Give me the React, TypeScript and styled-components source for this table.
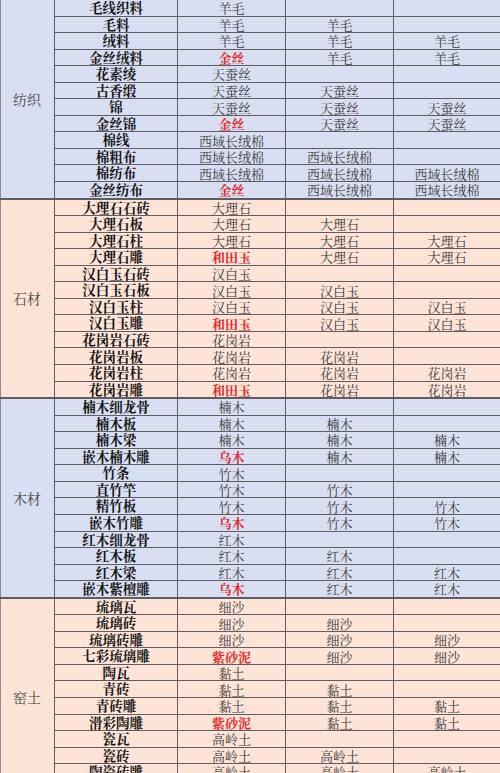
import React from "react";
import styled, { createGlobalStyle } from "styled-components";

const GlobalStyle = createGlobalStyle`
  html, body {
    margin: 0;
    padding: 0;
    background: #ffffff;
  }
  body {
    font-family: "Noto Serif CJK SC", "Noto Sans CJK SC", "Liberation Serif", serif;
    overflow: hidden;
  }
`;

const LINE = "#5d5d63";

const Table = styled.div`
  width: 500px;
  display: flex;
  flex-direction: column;
  gap: 2px;
  background: ${LINE};
`;

const Section = styled.div<{ $bg: string }>`
  display: grid;
  grid-template-columns: 53px 122px 107px 107px 106px;
  grid-auto-rows: 15.55px;
  gap: 1px;
  border-left: 1px solid #8a8a90;
  background: ${LINE};
  --cell-bg: ${(p) => p.$bg};
`;

const Cell = styled.div`
  background: var(--cell-bg);
  display: flex;
  align-items: center;
  justify-content: center;
  white-space: nowrap;
  line-height: 1;
`;

const Category = styled(Cell)`
  grid-column: 1;
  grid-row: 1 / span 12;
  font-size: 14px;
  color: #4a4a4a;
  padding-right: 1px;
`;

const ItemCell = styled(Cell)`
  font-size: 13.5px;
  font-weight: 700;
  color: #151515;
`;

const MatCell = styled(Cell)<{ $red?: boolean }>`
  font-size: 13px;
  font-weight: ${(p) => (p.$red ? 700 : 400)};
  color: ${(p) => (p.$red ? "#de2a2a" : "#3a3a3a")};
`;

type Group = { base: string; red: string; items: string[] };
type SectionData = { name: string; bg: string; groups: Group[] };

const BLUE = "#d9dff2";
const PEACH = "#fde4d7";

const sections: SectionData[] = [
  {
    name: "纺织",
    bg: BLUE,
    groups: [
      { base: "羊毛", red: "金丝", items: ["毛线织料", "毛料", "绒料", "金丝绒料"] },
      { base: "天蚕丝", red: "金丝", items: ["花素绫", "古香缎", "锦", "金丝锦"] },
      { base: "西域长绒棉", red: "金丝", items: ["棉线", "棉粗布", "棉纺布", "金丝纺布"] },
    ],
  },
  {
    name: "石材",
    bg: PEACH,
    groups: [
      { base: "大理石", red: "和田玉", items: ["大理石石砖", "大理石板", "大理石柱", "大理石雕"] },
      { base: "汉白玉", red: "和田玉", items: ["汉白玉石砖", "汉白玉石板", "汉白玉柱", "汉白玉雕"] },
      { base: "花岗岩", red: "和田玉", items: ["花岗岩石砖", "花岗岩板", "花岗岩柱", "花岗岩雕"] },
    ],
  },
  {
    name: "木材",
    bg: BLUE,
    groups: [
      { base: "楠木", red: "乌木", items: ["楠木细龙骨", "楠木板", "楠木梁", "嵌木楠木雕"] },
      { base: "竹木", red: "乌木", items: ["竹条", "直竹竿", "精竹板", "嵌木竹雕"] },
      { base: "红木", red: "乌木", items: ["红木细龙骨", "红木板", "红木梁", "嵌木紫檀雕"] },
    ],
  },
  {
    name: "窑土",
    bg: PEACH,
    groups: [
      { base: "细沙", red: "紫砂泥", items: ["琉璃瓦", "琉璃砖", "琉璃砖雕", "七彩琉璃雕"] },
      { base: "黏土", red: "紫砂泥", items: ["陶瓦", "青砖", "青砖雕", "滑彩陶雕"] },
      { base: "高岭土", red: "紫砂泥", items: ["瓷瓦", "瓷砖", "陶瓷砖雕", "彩瓷雕"] },
    ],
  },
];

function GroupRows({ g }: { g: Group }) {
  return (
    <>
      {g.items.map((item, i) => {
        const m1 = i === 3 ? g.red : g.base;
        const m2 = i >= 1 ? g.base : "";
        const m3 = i >= 2 ? g.base : "";
        return (
          <React.Fragment key={item}>
            <ItemCell>{item}</ItemCell>
            <MatCell $red={i === 3}>{m1}</MatCell>
            <MatCell>{m2}</MatCell>
            <MatCell>{m3}</MatCell>
          </React.Fragment>
        );
      })}
    </>
  );
}

export default function App() {
  return (
    <>
      <GlobalStyle />
      <Table>
        {sections.map((s) => (
          <Section key={s.name} $bg={s.bg}>
            <Category>{s.name}</Category>
            {s.groups.map((g) => (
              <GroupRows key={g.items[0]} g={g} />
            ))}
          </Section>
        ))}
      </Table>
    </>
  );
}
